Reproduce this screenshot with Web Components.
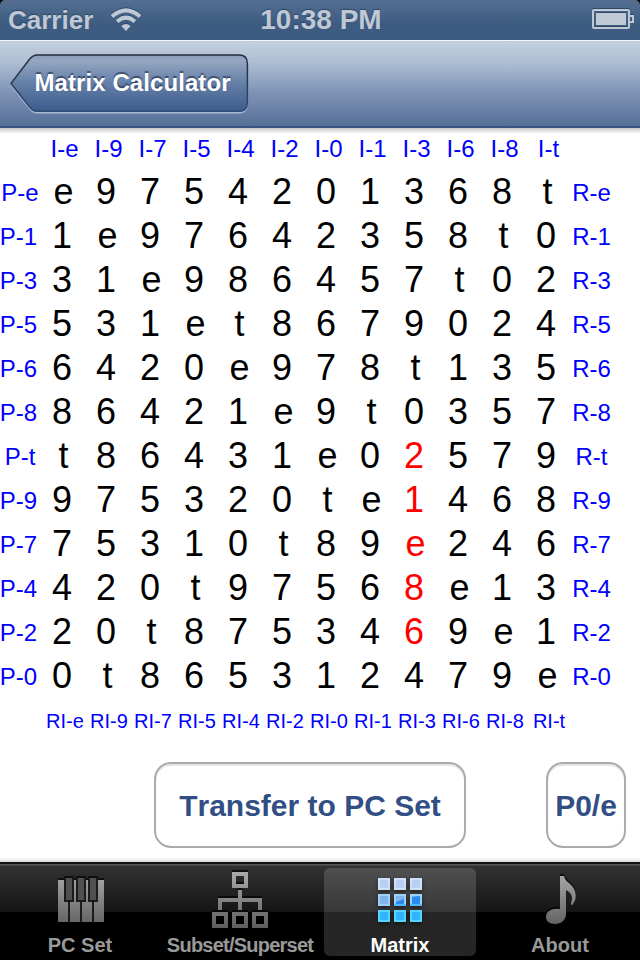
<!DOCTYPE html>
<html lang="en"><head><meta charset="utf-8"><title>Matrix Calculator</title>
<style>html,body{margin:0;background:#000}body{width:640px;height:960px;overflow:hidden;font-family:"Liberation Sans",Arial,sans-serif;font-kerning:none}</style></head>
<body><matrix-app></matrix-app>
<script>
const make=(name,html,init)=>customElements.define(name,class extends HTMLElement{
  constructor(){super();this.attachShadow({mode:'open'});}
  connectedCallback(){this.shadowRoot.innerHTML=html;if(init)init(this,this.shadowRoot);}
});

make('status-bar',`<style>
:host{display:grid;grid-template-columns:1fr auto 1fr;align-items:center;height:40px;box-sizing:border-box;padding:0 6px 0 8px;border-radius:5px 5px 0 0;background:linear-gradient(#546f90,#456286 40%,#3e5c82 60%,#3d5a80);color:#bfc8d5;font-weight:bold;text-shadow:0 -1px 1px #2c4565}
.l{display:flex;align-items:center;gap:17px;font-size:26px}.t{font-size:28px;line-height:38px}.r{justify-self:end;display:flex}
svg{display:block;filter:drop-shadow(0 -1px 0 #2f4969)}</style>
<div class="l"><span>Carrier</span><svg width="32" height="24" viewBox="0 0 32 24"><g fill="none" stroke="#bfc8d5" stroke-width="3.9"><path d="M2 8.4Q16-3.7 30 8.4"/><path d="M7.1 13.5Q16 5.7 24.9 13.5"/></g><path d="M11.4 18Q16 14 20.6 18L16 23Z" fill="#bfc8d5"/></svg></div>
<div class="t">10:38 PM</div>
<div class="r"><svg width="42" height="22" viewBox="0 0 42 22"><rect x="1" y="1" width="36" height="18" rx="1" fill="none" stroke="#bfc8d5" stroke-width="2"/><rect x="4" y="4" width="30" height="12" fill="#bfc8d5"/><path d="M38 7h3v6h-3" fill="none" stroke="#bfc8d5" stroke-width="2"/></svg></div>`);

make('back-button',`<style>
:host{display:grid;width:240px;height:62px}svg,span{grid-area:1/1}
span{align-self:center;padding:0 0 3px 24.5px;color:#fff;font:bold 24px/28px "Liberation Sans",Arial,sans-serif;letter-spacing:.08px;text-shadow:0 -2px 1px rgba(30,45,75,.65);white-space:nowrap}</style>
<svg width="240" height="62" viewBox="0 0 240 62"><defs>
<linearGradient id="g" x2="0" y2="1"><stop stop-color="#8b9dba"/><stop offset=".1" stop-color="#95a6c2"/><stop offset=".5" stop-color="#647fa7"/><stop offset="1" stop-color="#3d5c8c"/></linearGradient>
<linearGradient id="s" x2="0" y2="1"><stop stop-color="#262d3a"/><stop offset="1" stop-color="#304a73"/></linearGradient></defs>
<path d="M27 2H229Q237.4 2 237.4 10.5V49.5Q237.4 58.3 229 58.3H27Q23 58.3 19.5 54L1 30.5L19.5 6.3Q23 2 27 2Z" transform="translate(0 1.5)" fill="none" stroke="#a9b9cf" stroke-width="1.5"/>
<path d="M27 2H229Q237.4 2 237.4 10.5V49.5Q237.4 58.3 229 58.3H27Q23 58.3 19.5 54L1 30.5L19.5 6.3Q23 2 27 2Z" fill="url(#g)" stroke="url(#s)" stroke-width="1.5"/></svg><span><slot></slot></span>`);

make('nav-bar',`<style>:host{display:flex;box-sizing:border-box;height:88px;padding:12px 0 0 10px;border-top:1px solid #f3f6fa;border-bottom:2px solid #36547f;background:linear-gradient(#c2cfde,#aebed4 25%,#8196b7 58%,#566f98)}</style><slot></slot>`);

make('pitch-matrix',`<style>
:host{display:grid;grid-template-columns:40px repeat(12,44px) 48px;grid-template-rows:38px repeat(12,44px) 44px;width:640px;padding-top:4px;box-sizing:border-box}
div{display:flex;align-items:center;justify-content:center;white-space:nowrap;box-sizing:border-box}
.n{font-size:36px;color:#000;line-height:40px}.x{padding-left:3px}.hit{color:#f00}
.h{font-size:24px;color:#00f;line-height:28px}.top{padding:0 0 5px 5px}.side{padding-top:1px}.left.d{margin-left:-2px}.left.d{margin-right:1px}.right{padding-right:1px}.foot{font-size:20px;padding:2px 0 0 6px}</style>`,
(h,r)=>{
  const cols='e9754201368t',rows='e13568t97420';
  const m=['e9754201368t','1e97642358t0','31e986457t02','531et8679024','6420e978t135','86421e9t0357','t86431e02579','975320te1468','75310t89e246','420t97568e13','20t8753469e1','0t865312479e'];
  let o='<div></div>'+[...cols].map(c=>`<div class="h top">I-${c}</div>`).join('')+'<div></div>';
  m.forEach((s,i)=>{const c=rows[i];
    o+=`<div class="h side left ${/\d/.test(c)?'d':''}">P-${c}</div>`+[...s].map((v,j)=>`<div class="n ${/\d/.test(v)?'':'x'} ${j==8&&i>5&&i<11?'hit':''}">${v}</div>`).join('')+`<div class="h side right">R-${c}</div>`});
  o+='<div></div>'+[...cols].map(c=>`<div class="h foot">RI-${c}</div>`).join('')+'<div></div>';
  r.innerHTML+=o;
});

make('round-button',`<style>:host{display:flex;align-items:center;justify-content:center;box-sizing:border-box;height:86px;padding-top:2px;border:2px solid #ababab;border-radius:17px;background:#fff;box-shadow:inset 0 2px 1px #e6e6e6;color:#324f85;font-weight:bold;font-size:30px;white-space:nowrap}</style><slot></slot>`);

make('tab-item',`<style>
:host{display:flex;flex-direction:column;align-items:center;width:152px;height:88px;border-radius:6px;color:#999;font-weight:bold;font-size:20px}
:host([selected]){background:rgba(255,255,255,.15);color:#fff}
svg{display:block;height:66px;width:80px;flex:none}:host(:not([selected])) svg{filter:drop-shadow(0 -2px 0 rgba(0,0,0,.65))}:host([selected]) svg{filter:drop-shadow(0 2px 2px rgba(0,0,0,.5))}
span{line-height:22px;white-space:nowrap}:host([tight]) span{letter-spacing:-.77px}</style><svg viewBox="0 0 80 66"></svg><span><slot></slot></span>`,
(h,r)=>{
 const grad='<defs><linearGradient id="g" gradientUnits="userSpaceOnUse" x1="0" y1="4" x2="0" y2="60"><stop stop-color="#aaa"/><stop offset="1" stop-color="#5e5e5e"/></linearGradient></defs>';
 const icons={
  piano:'<path fill="url(#g)" d="M18 12h46v42H18z"/><path fill="#1b1b1b" d="M24 10h10v24H24zM36 10h10v24H36zM48 10h10v24H48zM28 34h2v20h-2zM40 34h2v20h-2zM52 34h2v20h-2z"/><path fill="#505050" d="M26 10h6v22h-6zM38 10h6v22h-6zM50 10h6v22h-6z"/>',
  tree:'<path fill="none" stroke="url(#g)" stroke-width="4" d="M34 6h12v12H34zM14 46h12v12H14zM34 46h12v12H34zM54 46h12v12H54zM40 22v20M20 42V32H60V42"/>',
  note:'<path fill="url(#g)" d="M40 8h4c1 6 7 7 10 13c3 6 2 12-2 16h-1v-2c2-6 1-10-5-13V46c0 6-5 10-11 10c-6 0-9-3-9-7c0-6 6-9 14-8z"/>'};
 const s=r.querySelector('svg'),k=h.getAttribute('icon');
 if(k!=='grid')s.innerHTML=grad+icons[k];
 else{let o='';const f=['#b9d0f2','#82b4ec','#30b5fc'],b=['#cfe1f8','#9bd0f7','#55d5ff'];
  for(let y=0;y<3;y++)for(let x=0;x<3;x++)o+=`<rect x="${18+16*x}" y="${10+16*y}" width="12" height="12" fill="${b[y]}"/><rect x="${20+16*x}" y="${12+16*y}" width="8" height="8" fill="${f[y]}"/>`;
  s.innerHTML=o+'<path fill="#288bf2" d="M36 34l8-3v5h-8zM52 29l8-1v8h-8z"/><path fill="#51b6fa" d="M34 36h12v2H34zM50 36h12v2H50z"/>';}
});

make('tab-bar',`<style>:host{display:flex;box-sizing:border-box;justify-content:space-between;height:98px;padding:4px 4px 0;border-top:2px solid #111;background:linear-gradient(#555 0 1px,#454545 1px 2px,transparent 2px),linear-gradient(#333,#151515 48px,#000 48px)}</style><slot></slot>`);

make('matrix-app',`<style>:host{display:flex;flex-direction:column;width:640px;height:960px;background:#fff;overflow:hidden}
.top{background:#000}main{height:734px;background:linear-gradient(#c9c9c9,#e4e4e4 3px,#fff 6px,#fff 730px,#d5d5d5 734px)}.actions{display:flex;gap:80px;padding-left:154px;margin-top:20px}.a{width:312px}.b{width:80px}</style>
<div class="top"><status-bar></status-bar></div><nav-bar><back-button>Matrix Calculator</back-button></nav-bar>
<main><pitch-matrix></pitch-matrix><div class="actions"><round-button class="a">Transfer to PC Set</round-button><round-button class="b">P0/e</round-button></div></main>
<tab-bar><tab-item icon="piano">PC Set</tab-item><tab-item icon="tree" tight>Subset/Superset</tab-item><tab-item icon="grid" selected>Matrix</tab-item><tab-item icon="note">About</tab-item></tab-bar>`);
</script></body></html>
